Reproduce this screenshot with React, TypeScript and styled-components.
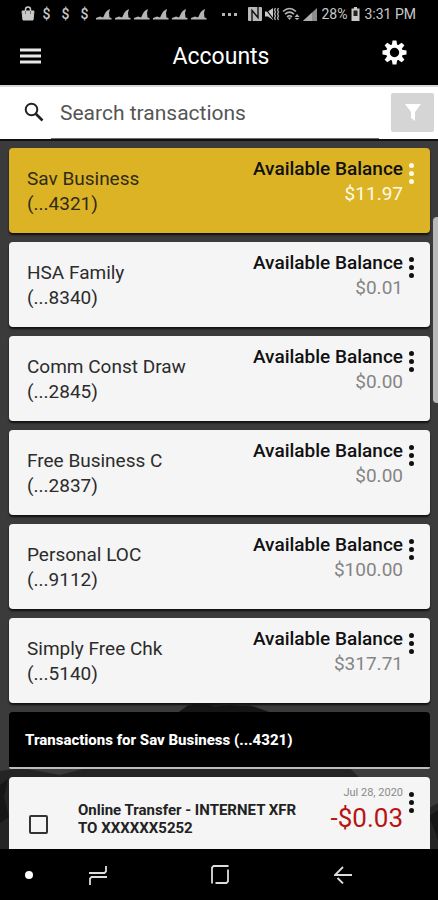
import React from "react";
import styled, { createGlobalStyle } from "styled-components";

const GlobalStyle = createGlobalStyle`
  *, *::before, *::after { box-sizing: border-box; }
  body { margin: 0; background: #000; font-family: Roboto, "Liberation Sans", sans-serif; }
  button { padding: 0; border: 0; background: none; color: inherit; font: inherit; cursor: pointer; }
  h1, h2, p { margin: 0; }
  svg { display: block; }
`;

const Screen = styled.div`
  display: flex;
  flex-direction: column;
  height: 100vh;
  overflow: hidden;
  background: #000;
`;

const StatusBar = styled.div`
  display: flex;
  align-items: center;
  justify-content: space-between;
  flex: none;
  height: 28px;
  padding: 0 20px 0 18px;
  color: #c9c9c9;
  font-size: 14px;
`;

const Notices = styled.div`
  display: flex;
  align-items: center;
`;

const Notice = styled.span`
  display: flex;
  justify-content: center;
  width: 19px;
  font-size: 14px;
  font-weight: 500;
`;

const More = styled.span`
  display: flex;
  gap: 3px;
  margin-left: 14px;
  &::before, &::after, i { content: ""; width: 3px; height: 3px; background: #b5b5b5; }
`;

const System = styled.div`
  display: flex;
  align-items: center;
  gap: 2px;
`;

const Reading = styled.span`
  margin: 0 2px;
  white-space: nowrap;
`;

const Header = styled.header`
  display: grid;
  grid-template-columns: 58px 1fr 48px;
  align-items: center;
  flex: none;
  height: 57px;
  padding: 0 20px 0 14px;
  color: #fff;
`;

const Title = styled.h1`
  font-size: 23px;
  line-height: 28px;
  font-weight: 400;
  text-align: center;
`;

const HeaderButton = styled.button<{ $end?: boolean }>`
  display: flex;
  justify-content: ${(p) => (p.$end ? "center" : "flex-start")};
  align-items: center;
  height: ${(p) => (p.$end ? 52 : 48)}px;
  padding: ${(p) => (p.$end ? "0 0 8px" : "0 0 2px 6px")};
`;

const SearchBar = styled.form`
  display: flex;
  flex: none;
  height: 54px;
  padding-left: 23px;
  padding-right: 4px;
  background: #fff;
  border-top: 2px solid #d8d8d8;
`;

const SearchLabel = styled.label`
  display: flex;
  align-items: center;
  width: 28px;
  padding-bottom: 2px;
`;

const SearchInput = styled.input`
  flex: 1;
  min-width: 0;
  margin-right: 12px;
  padding: 0 9px;
  border: 0;
  border-bottom: 1px solid #6c6c6c;
  outline: 0;
  background: none;
  color: #444;
  font: 400 21px Roboto, sans-serif;
  &::placeholder { color: #555; opacity: 1; }
`;

const FilterButton = styled.button`
  display: flex;
  align-items: center;
  justify-content: center;
  width: 43px;
  height: 39px;
  margin-top: 6px;
  border-radius: 2px;
  background: #d5d5d5;
`;

const Main = styled.main`
  position: relative;
  flex: 1;
  min-height: 0;
  overflow: hidden;
  padding: 7px 8px 0 9px;
  border-top: 2px solid #111;
  background: #3b3b3b;
`;

const Backdrop = styled.svg`
  position: absolute;
  left: 0;
  bottom: 0;
  width: 100%;
  height: 150px;
`;

const ScrollThumb = styled.div`
  position: absolute;
  right: 0;
  top: 76px;
  width: 5px;
  height: 186px;
  border-radius: 4px 0 0 4px;
  background: #b9b9b9;
`;

const CardList = styled.ul`
  position: relative;
  display: flex;
  flex-direction: column;
  gap: 9px;
  margin: 0;
  padding: 0;
  list-style: none;
`;

const AccountCard = styled.li<{ $selected?: boolean }>`
  display: flex;
  height: 85px;
  padding: 8px 15px 0 18px;
  border-radius: 4px;
  background: ${(p) => (p.$selected ? "#dcb325" : "#f5f5f5")};
  box-shadow: 0 2px 2px #111;
  color: ${(p) => (p.$selected ? "#302b18" : "#2c2c2c")};
`;

const AccountName = styled.p`
  flex: 1;
  padding-top: 10px;
  font-size: 19px;
  line-height: 25px;
`;

const Balance = styled.div`
  font-size: 19px;
  line-height: 25px;
  text-align: right;
`;

const BalanceLabel = styled.p`
  color: #111;
  font-weight: 500;
`;

const Amount = styled.p<{ $selected?: boolean }>`
  color: ${(p) => (p.$selected ? "#fffbe9" : "#858585")};
`;

const Dots = styled.button<{ $light?: boolean }>`
  display: flex;
  flex-direction: column;
  align-items: center;
  gap: 3px;
  align-self: flex-start;
  width: 7px;
  margin-left: 5px;
  padding-top: 7px;
  i {
    width: 5px;
    height: 5px;
    border-radius: 50%;
    background: ${(p) => (p.$light ? "#fffbe9" : "#111")};
  }
`;

const SectionHeading = styled.h2`
  position: relative;
  display: flex;
  align-items: center;
  height: 57px;
  margin-top: 9px;
  padding-left: 16px;
  border-bottom: 2px solid #bdbdbd;
  border-radius: 4px 4px 2px 2px;
  background: #000;
  color: #fff;
  font-size: 15px;
  line-height: 18px;
  font-weight: 800;
`;

const TransactionCard = styled.article`
  position: relative;
  display: flex;
  height: 90px;
  margin-top: 8px;
  padding: 8px 15px 0 20px;
  border-radius: 4px;
  background: #f5f5f5;
  color: #222;
`;

const CheckBox = styled.input`
  appearance: none;
  flex: none;
  width: 19px;
  height: 19px;
  margin: 30px 30px 0 0;
  border: 2px solid #333;
  border-radius: 2px;
  &:checked { background: #333; }
`;

const Description = styled.label`
  flex: 1;
  padding-top: 16px;
  font-size: 15px;
  line-height: 18px;
  font-weight: 700;
  white-space: nowrap;
`;

const Posted = styled.div`
  text-align: right;
`;

const PostedDate = styled.p`
  color: #8a8a8a;
  font-size: 11px;
  line-height: 16px;
`;

const Debit = styled.p`
  color: #b81414;
  font-size: 26px;
  line-height: 34px;
`;

const NavBar = styled.nav`
  display: grid;
  grid-template-columns: 58px 79px 1fr 79px 56px;
  align-items: center;
  justify-items: center;
  flex: none;
  height: 51px;
  background: #000;
`;

const NavDot = styled.i`
  width: 8px;
  height: 8px;
  border-radius: 50%;
  background: #fff;
`;

const Bag = () => (
  <svg width="14" height="16" viewBox="0 0 14 16" fill="#c9c9c9">
    <path d="M1 5h12l-1 9H2z" stroke="#c9c9c9" strokeLinejoin="round" />
    <path d="M4.500 6V3.500a2.500 2.500 0 0 1 5 0V6" fill="none" stroke="#c9c9c9" strokeWidth="1.500" />
    <path d="M4.500 5v3M9.500 5v3" stroke="#777" />
  </svg>
);

const Fin = () => (
  <svg width="16" height="12" viewBox="0 0 16 12" fill="#b5b5b5">
    <path d="M0 11.500V10l4-1.500L7 9.500C8.500 8 8.500 3 14 1l-1 4 .5 4.500 2 .5v1.500z" />
  </svg>
);

const Nfc = () => (
  <svg width="14" height="14" viewBox="0 0 14 14">
    <rect width="14" height="14" rx="1" fill="#b9b9b9" />
    <path d="M4 14V3.500l6 7V0" fill="none" stroke="#111" strokeWidth="1.400" />
  </svg>
);

const Mute = () => (
  <svg width="16" height="14" viewBox="0 0 16 14">
    <path d="M1 4.500h3L9 1v12L4 9.500H1z" fill="#c9c9c9" />
    <path d="M1 1l9 12" stroke="#000" strokeWidth="1.200" />
    <path d="M11.500 1l-1 2 1 2-1 2 1 2-1 2 1 2M14.500 1l-1 2 1 2-1 2 1 2-1 2 1 2" fill="none" stroke="#b5b5b5" strokeWidth="1.300" />
  </svg>
);

const Wifi = () => (
  <svg width="19" height="14" viewBox="0 0 19 14" fill="none" stroke="#b5b5b5" strokeWidth="1.600">
    <path d="M1 4.500q6.500-6 13 0M3 7.200q4.500-4 9 0M5 9.800q2.500-2 5 0" />
    <path d="M5.500 10.500h4L7.500 13zM15 7l2.500 3h-5zM15 13l2.500-2h-5z" fill="#b5b5b5" stroke="none" />
  </svg>
);

const Signal = () => (
  <svg width="14" height="13" viewBox="0 0 14 13" fill="#8d8d8d">
    <path d="M0 13L14 0v13z" />
    <path d="M0 13L9 4.600V13z" fill="#adadad" />
  </svg>
);

const Battery = () => (
  <svg width="9" height="14" viewBox="0 0 9 14">
    <path d="M3 0h3v1.500h2.500V14H.5V1.500H3z" fill="#c9c9c9" />
    <path d="M2.500 3.500h4V9h-4z" fill="#222" />
  </svg>
);

const Gear = () => (
  <svg width="25" height="25" viewBox="-13 -13 26 26" fill="#fff">
    {[0, 45, 90, 135, 180, 225, 270, 315].map((a) => (
      <path key={a} d="M-2.800-7.500L-2-12.500h4l.8 5z" transform={`rotate(${a})`} />
    ))}
    <circle r="6.800" fill="none" stroke="#fff" strokeWidth="3.800" />
  </svg>
);

const ThreeDots = ({ light, label }: { light?: boolean; label: string }) => (
  <Dots type="button" $light={light} aria-label={label}>
    <i />
    <i />
    <i />
  </Dots>
);

const accounts = [
  { name: "Sav Business", number: "(...4321)", amount: "$11.97", selected: true },
  { name: "HSA Family", number: "(...8340)", amount: "$0.01" },
  { name: "Comm Const Draw", number: "(...2845)", amount: "$0.00" },
  { name: "Free Business C", number: "(...2837)", amount: "$0.00" },
  { name: "Personal LOC", number: "(...9112)", amount: "$100.00" },
  { name: "Simply Free Chk", number: "(...5140)", amount: "$317.71" },
];

export default function App() {
  return (
    <>
      <GlobalStyle />
      <Screen>
        <StatusBar>
          <Notices>
            <Notice><Bag /></Notice>
            {[0, 1, 2].map((n) => <Notice key={n}>$</Notice>)}
            {[0, 1, 2, 3, 4, 5].map((n) => <Notice key={n}><Fin /></Notice>)}
            <More><i /></More>
          </Notices>
          <System>
            <Nfc />
            <Mute />
            <Wifi />
            <Signal />
            <Reading>28%</Reading>
            <Battery />
            <Reading>3:31 PM</Reading>
          </System>
        </StatusBar>

        <Header>
          <HeaderButton type="button" aria-label="Menu">
            <svg width="21" height="16" viewBox="0 0 21 16" stroke="#e8e8e8" strokeWidth="3">
              <path d="M0 2h21M0 8h21M0 14h21" />
            </svg>
          </HeaderButton>
          <Title>Accounts</Title>
          <HeaderButton type="button" $end aria-label="Settings"><Gear /></HeaderButton>
        </Header>

        <SearchBar onSubmit={(e) => e.preventDefault()}>
          <SearchLabel htmlFor="search" aria-label="Search transactions">
            <svg width="22" height="20" viewBox="0 0 22 20" fill="none" stroke="#222" strokeWidth="2">
              <circle cx="8.500" cy="7.500" r="5.800" />
              <path d="M12.500 11.500l7 7" strokeWidth="2.600" />
            </svg>
          </SearchLabel>
          <SearchInput id="search" type="text" placeholder="Search transactions" />
          <FilterButton type="button" aria-label="Filter">
            <svg width="16" height="17" viewBox="0 0 16 17" fill="#fff">
              <path d="M0 0h16L10 8v9l-4-3V8z" />
            </svg>
          </FilterButton>
        </SearchBar>

        <Main>
          <Backdrop viewBox="0 0 438 150" preserveAspectRatio="none" aria-hidden="true">
            <path d="M0 72L22 69 60 76 120 60 172 18 188 6 208 2 228 7 250 6 278 16 330 50 365 84 400 108 424 112 438 104V150H0z" fill="#242424" />
            <path d="M176 15L188 7 204 3 214 8 230 6 254 8 274 15z" fill="#151515" />
            <path d="M0 86L8 80 4 98 9 118 0 124zM428 118l10-7v30l-5-14z" fill="#161616" />
          </Backdrop>
          <CardList>
            {accounts.map((a) => (
              <AccountCard key={a.number} $selected={a.selected}>
                <AccountName>{a.name}<br />{a.number}</AccountName>
                <Balance>
                  <BalanceLabel>Available Balance</BalanceLabel>
                  <Amount $selected={a.selected}>{a.amount}</Amount>
                </Balance>
                <ThreeDots light={a.selected} label={`Options for ${a.name}`} />
              </AccountCard>
            ))}
          </CardList>
          <SectionHeading>Transactions for Sav Business (...4321)</SectionHeading>
          <TransactionCard>
            <CheckBox id="transfer" type="checkbox" />
            <Description htmlFor="transfer">Online Transfer - INTERNET XFR<br />TO XXXXXX5252</Description>
            <Posted>
              <PostedDate>Jul 28, 2020</PostedDate>
              <Debit>-$0.03</Debit>
            </Posted>
            <ThreeDots label="Transaction options" />
          </TransactionCard>
          <ScrollThumb />
        </Main>

        <NavBar>
          <NavDot />
          <button type="button" aria-label="Recent apps">
            <svg width="18" height="20" viewBox="0 0 18 20" fill="none" stroke="#ddd" strokeWidth="1.800">
              <path d="M0 8h15.500l1.500-1.500V1M1 20v-6.500l1.500-1.500H18" />
            </svg>
          </button>
          <button type="button" aria-label="Home">
            <svg width="18" height="19" viewBox="0 0 18 19" fill="none" stroke="#ddd" strokeWidth="1.800">
              <path d="M1 18.500V2.500L2.500 1H17.500M17 4.500v12L15.500 18H4.500" />
            </svg>
          </button>
          <button type="button" aria-label="Back">
            <svg width="18" height="18" viewBox="0 0 18 18" fill="none" stroke="#ddd" strokeWidth="1.800">
              <path d="M18 9H1L9 1M3.500 12L9 17.500" />
            </svg>
          </button>
        </NavBar>
      </Screen>
    </>
  );
}
